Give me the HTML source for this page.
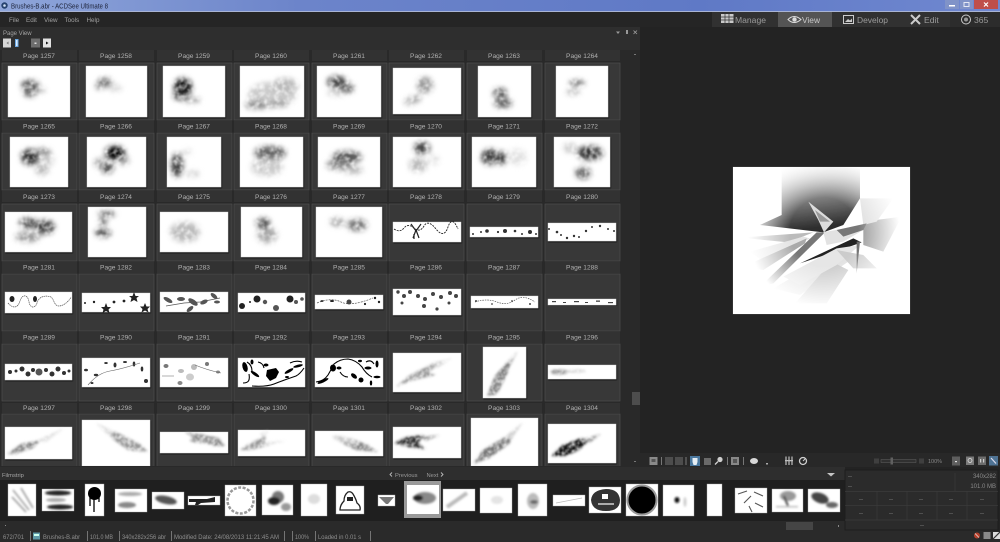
<!DOCTYPE html>
<html><head><meta charset="utf-8"><title>Brushes-B.abr - ACDSee Ultimate 8</title>
<style>
html,body{margin:0;padding:0;background:#232323;width:1000px;height:542px;overflow:hidden}
svg{display:block;font-family:"Liberation Sans",sans-serif}
.l{font-size:6.6px;fill:#b0b0b0;text-anchor:middle}
.c{fill:#383838;stroke:#4e4e4e;stroke-width:.7}
.h{fill:#323232}
.t{fill:#fff;stroke:#d8d8d8;stroke-width:.4;filter:url(#sh)}
.m{font-size:6.3px;fill:#a0a0a0}
.s{font-size:6.6px;fill:#8e8e8e}
.tb{font-size:8.6px;fill:#9b9b9b}
.i{font-size:6px;fill:#8a8a8a}
</style></head><body>
<svg width="1000" height="542" viewBox="0 0 1000 542" xmlns="http://www.w3.org/2000/svg">
<defs>
<linearGradient id="tg" x1="0" x2="1" y1="0" y2="0"><stop offset="0" stop-color="#8fa6da"/><stop offset=".3" stop-color="#6c84ca"/><stop offset=".7" stop-color="#5f79c6"/><stop offset="1" stop-color="#7088d0"/></linearGradient>
<linearGradient id="dk" x1="0" x2=".2" y1="0" y2="1"><stop offset="0" stop-color="#fff"/><stop offset=".45" stop-color="#999"/><stop offset="1" stop-color="#2e2e2e"/></linearGradient>
<radialGradient id="vg" gradientUnits="userSpaceOnUse" cx="824" cy="232" r="76"><stop offset="0" stop-color="#fff" stop-opacity="0"/><stop offset=".45" stop-color="#fff" stop-opacity="0"/><stop offset="1" stop-color="#fff" stop-opacity="1"/></radialGradient>
<filter id="b3" x="-20%" y="-20%" width="140%" height="140%"><feGaussianBlur stdDeviation=".3"/></filter>
<filter id="b1" x="-30%" y="-30%" width="160%" height="160%"><feGaussianBlur stdDeviation="1"/></filter>
<filter id="b5" x="-10%" y="-10%" width="120%" height="120%"><feGaussianBlur stdDeviation=".5"/></filter>
<filter id="cl" filterUnits="userSpaceOnUse" x="0" y="50" width="640" height="420" color-interpolation-filters="sRGB"><feGaussianBlur in="SourceGraphic" stdDeviation="2.600" result="b"/><feTurbulence type="fractalNoise" baseFrequency=".2" numOctaves="2" seed="4" result="n"/><feColorMatrix in="n" type="matrix" values="0 0 0 0 0 0 0 0 0 0 0 0 0 0 0 1.700 0 0 0 -.05" result="a"/><feComposite in="b" in2="a" operator="in" result="c"/><feGaussianBlur in="c" stdDeviation=".5"/></filter>
<filter id="wg" filterUnits="userSpaceOnUse" x="0" y="340" width="640" height="130" color-interpolation-filters="sRGB"><feGaussianBlur in="SourceGraphic" stdDeviation="1.400" result="b"/><feTurbulence type="fractalNoise" baseFrequency=".25" numOctaves="2" seed="9" result="n"/><feColorMatrix in="n" type="matrix" values="0 0 0 0 0 0 0 0 0 0 0 0 0 0 0 1.500 0 0 0 0" result="a"/><feComposite in="b" in2="a" operator="in" result="c"/><feGaussianBlur in="c" stdDeviation=".4"/></filter>
<filter id="sh" x="-10%" y="-10%" width="120%" height="125%"><feDropShadow dx=".6" dy="1" stdDeviation=".6" flood-color="#000" flood-opacity=".8"/></filter>
<clipPath id="pv"><rect x="733" y="167" width="177" height="147"/></clipPath>
<clipPath id="gr"><rect x="0" y="50" width="630" height="416"/></clipPath>
</defs>

<!-- base -->
<rect width="1000" height="542" fill="#232323"/>
<rect width="1000" height="11" fill="url(#tg)"/>
<rect y="11" width="1000" height="1" fill="#a9b4d4"/>
<circle cx="4.500" cy="5.500" r="3.200" fill="#26426e"/><circle cx="4.500" cy="5.500" r="1.300" fill="#cfe0f4"/>
<text x="11" y="8.500" font-size="7" fill="#1c2238" textLength="97" lengthAdjust="spacingAndGlyphs">Brushes-B.abr - ACDSee Ultimate 8</text>
<rect x="945" y="0" width="14" height="9" fill="#8093c8"/><rect x="949" y="5" width="6" height="1.500" fill="#fff"/>
<rect x="960" y="0" width="13" height="9" fill="#8093c8"/><rect x="964" y="2.500" width="5" height="4" fill="none" stroke="#e4e8f4"/>
<rect x="974" y="0" width="24" height="9" fill="#bf4f4a"/><path d="M984 2.500l4 4M988 2.500l-4 4" stroke="#fff" stroke-width="1.200"/>

<!-- menu -->
<rect y="12" width="1000" height="15" fill="#252525"/>
<text x="9" y="22" class="m">File</text><text x="26" y="22" class="m">Edit</text><text x="44" y="22" class="m">View</text><text x="64.500" y="22" class="m">Tools</text><text x="86.500" y="22" class="m">Help</text>
<rect x="712" y="12" width="66" height="15" fill="#313131"/>
<rect x="778" y="12" width="54" height="15" fill="#545454"/>
<rect x="832" y="12" width="67" height="15" fill="#313131"/>
<rect x="899" y="12" width="51" height="15" fill="#313131"/>
<rect x="950" y="12" width="50" height="15" fill="#2c2c2c"/>
<path d="M721 14h12.500v9h-12.500z" fill="#c9c9c9"/><path d="M725 14v9M729 14v9M721 17h12.500M721 20h12.500" stroke="#313131" stroke-width=".7"/>
<text x="735" y="23" class="tb" textLength="31" lengthAdjust="spacingAndGlyphs">Manage</text>
<path d="M788 19.500q6-6 13 0q-7 6-13 0z" fill="none" stroke="#ddd" stroke-width="1"/><circle cx="794.500" cy="19.500" r="2.200" fill="#ddd"/>
<text x="802" y="23" font-size="8.600" fill="#c8c8c8" textLength="18" lengthAdjust="spacingAndGlyphs">View</text>
<rect x="843.500" y="15.500" width="10" height="8" fill="none" stroke="#ccc" stroke-width="1"/><path d="M845 22l3-3 2 1.500 2-2v3.500z" fill="#ccc"/>
<text x="857" y="23" class="tb" textLength="31" lengthAdjust="spacingAndGlyphs">Develop</text>
<path d="M911 15l9 9M920 15l-9 9" stroke="#ccc" stroke-width="2"/>
<text x="924" y="23" class="tb">Edit</text>
<circle cx="966" cy="19.500" r="4.500" fill="none" stroke="#ccc" stroke-width="1"/><circle cx="966" cy="19.500" r="2" fill="#999"/>
<text x="974" y="23" class="tb">365</text>

<!-- page view panel -->
<rect x="0" y="27" width="640" height="23" fill="#2e2e2e"/>
<rect x="0" y="50" width="640" height="417" fill="#292929"/>
<text x="3" y="35" font-size="6" fill="#a4a4a4">Page View</text>
<rect x="3" y="38.500" width="8" height="9" fill="#d6d6d6"/><path d="M8.500 41.500v3l-2-1.500z" fill="#777"/>
<rect x="15" y="39" width="3.500" height="8" fill="#6aa6e0"/><rect x="16" y="40" width="1.500" height="6" fill="#d8ecff"/>
<rect x="31" y="38.500" width="9" height="9" fill="#6e6e6e"/><rect x="34.500" y="42.500" width="2" height="1.500" fill="#ddd"/>
<rect x="43" y="38.500" width="8" height="9" fill="#e2e2e2"/><path d="M46 41.500v3l2.500-1.500z" fill="#111"/>
<path d="M616 31.500h4l-2 2.500z" fill="#999"/><rect x="626" y="30" width="2" height="4" fill="#999"/>
<path d="M633.500 30.500l3.500 3.500M637 30.500l-3.500 3.500" stroke="#999" stroke-width=".8"/>
<rect x="630" y="50" width="10" height="417" fill="#292929"/>
<rect x="632" y="392" width="8" height="13" fill="#4d4d4d"/>
<rect x="634" y="54" width="2" height="1" fill="#777"/><rect x="634" y="461" width="2" height="1" fill="#777"/>

<g clip-path="url(#gr)">
<!-- label strips and cells -->
<rect class="h" x="2" y="50" width="75" height="11"/><rect class="h" x="79" y="50" width="75" height="11"/><rect class="h" x="157" y="50" width="75" height="11"/><rect class="h" x="234" y="50" width="75" height="11"/><rect class="h" x="312" y="50" width="75" height="11"/><rect class="h" x="389" y="50" width="75" height="11"/><rect class="h" x="467" y="50" width="75" height="11"/><rect class="h" x="545" y="50" width="75" height="11"/>
<rect class="h" x="2" y="121" width="75" height="11"/><rect class="h" x="79" y="121" width="75" height="11"/><rect class="h" x="157" y="121" width="75" height="11"/><rect class="h" x="234" y="121" width="75" height="11"/><rect class="h" x="312" y="121" width="75" height="11"/><rect class="h" x="389" y="121" width="75" height="11"/><rect class="h" x="467" y="121" width="75" height="11"/><rect class="h" x="545" y="121" width="75" height="11"/>
<rect class="h" x="2" y="191" width="75" height="11"/><rect class="h" x="79" y="191" width="75" height="11"/><rect class="h" x="157" y="191" width="75" height="11"/><rect class="h" x="234" y="191" width="75" height="11"/><rect class="h" x="312" y="191" width="75" height="11"/><rect class="h" x="389" y="191" width="75" height="11"/><rect class="h" x="467" y="191" width="75" height="11"/><rect class="h" x="545" y="191" width="75" height="11"/>
<rect class="h" x="2" y="262" width="75" height="11"/><rect class="h" x="79" y="262" width="75" height="11"/><rect class="h" x="157" y="262" width="75" height="11"/><rect class="h" x="234" y="262" width="75" height="11"/><rect class="h" x="312" y="262" width="75" height="11"/><rect class="h" x="389" y="262" width="75" height="11"/><rect class="h" x="467" y="262" width="75" height="11"/><rect class="h" x="545" y="262" width="75" height="11"/>
<rect class="h" x="2" y="332" width="75" height="11"/><rect class="h" x="79" y="332" width="75" height="11"/><rect class="h" x="157" y="332" width="75" height="11"/><rect class="h" x="234" y="332" width="75" height="11"/><rect class="h" x="312" y="332" width="75" height="11"/><rect class="h" x="389" y="332" width="75" height="11"/><rect class="h" x="467" y="332" width="75" height="11"/><rect class="h" x="545" y="332" width="75" height="11"/>
<rect class="h" x="2" y="403" width="75" height="10"/><rect class="h" x="79" y="403" width="75" height="10"/><rect class="h" x="157" y="403" width="75" height="10"/><rect class="h" x="234" y="403" width="75" height="10"/><rect class="h" x="312" y="403" width="75" height="10"/><rect class="h" x="389" y="403" width="75" height="10"/><rect class="h" x="467" y="403" width="75" height="10"/><rect class="h" x="545" y="403" width="75" height="10"/>
<rect class="c" x="2" y="63" width="75" height="57"/><rect class="c" x="79" y="63" width="75" height="57"/><rect class="c" x="157" y="63" width="75" height="57"/><rect class="c" x="234" y="63" width="75" height="57"/><rect class="c" x="312" y="63" width="75" height="57"/><rect class="c" x="389" y="63" width="75" height="57"/><rect class="c" x="467" y="63" width="75" height="57"/><rect class="c" x="545" y="63" width="75" height="57"/>
<rect class="c" x="2" y="133" width="75" height="57"/><rect class="c" x="79" y="133" width="75" height="57"/><rect class="c" x="157" y="133" width="75" height="57"/><rect class="c" x="234" y="133" width="75" height="57"/><rect class="c" x="312" y="133" width="75" height="57"/><rect class="c" x="389" y="133" width="75" height="57"/><rect class="c" x="467" y="133" width="75" height="57"/><rect class="c" x="545" y="133" width="75" height="57"/>
<rect class="c" x="2" y="204" width="75" height="57"/><rect class="c" x="79" y="204" width="75" height="57"/><rect class="c" x="157" y="204" width="75" height="57"/><rect class="c" x="234" y="204" width="75" height="57"/><rect class="c" x="312" y="204" width="75" height="57"/><rect class="c" x="389" y="204" width="75" height="57"/><rect class="c" x="467" y="204" width="75" height="57"/><rect class="c" x="545" y="204" width="75" height="57"/>
<rect class="c" x="2" y="274" width="75" height="57"/><rect class="c" x="79" y="274" width="75" height="57"/><rect class="c" x="157" y="274" width="75" height="57"/><rect class="c" x="234" y="274" width="75" height="57"/><rect class="c" x="312" y="274" width="75" height="57"/><rect class="c" x="389" y="274" width="75" height="57"/><rect class="c" x="467" y="274" width="75" height="57"/><rect class="c" x="545" y="274" width="75" height="57"/>
<rect class="c" x="2" y="344" width="75" height="57"/><rect class="c" x="79" y="344" width="75" height="57"/><rect class="c" x="157" y="344" width="75" height="57"/><rect class="c" x="234" y="344" width="75" height="57"/><rect class="c" x="312" y="344" width="75" height="57"/><rect class="c" x="389" y="344" width="75" height="57"/><rect class="c" x="467" y="344" width="75" height="57"/><rect class="c" x="545" y="344" width="75" height="57"/>
<rect class="c" x="2" y="414" width="75" height="60"/><rect class="c" x="79" y="414" width="75" height="60"/><rect class="c" x="157" y="414" width="75" height="60"/><rect class="c" x="234" y="414" width="75" height="60"/><rect class="c" x="312" y="414" width="75" height="60"/><rect class="c" x="389" y="414" width="75" height="60"/><rect class="c" x="467" y="414" width="75" height="60"/><rect class="c" x="545" y="414" width="75" height="60"/>

<!-- labels -->
<text class="l" x="39" y="58">Page 1257</text><text class="l" x="116" y="58">Page 1258</text><text class="l" x="194" y="58">Page 1259</text><text class="l" x="271" y="58">Page 1260</text><text class="l" x="349" y="58">Page 1261</text><text class="l" x="426" y="58">Page 1262</text><text class="l" x="504" y="58">Page 1263</text><text class="l" x="582" y="58">Page 1264</text>
<text class="l" x="39" y="128.500">Page 1265</text><text class="l" x="116" y="128.500">Page 1266</text><text class="l" x="194" y="128.500">Page 1267</text><text class="l" x="271" y="128.500">Page 1268</text><text class="l" x="349" y="128.500">Page 1269</text><text class="l" x="426" y="128.500">Page 1270</text><text class="l" x="504" y="128.500">Page 1271</text><text class="l" x="582" y="128.500">Page 1272</text>
<text class="l" x="39" y="199">Page 1273</text><text class="l" x="116" y="199">Page 1274</text><text class="l" x="194" y="199">Page 1275</text><text class="l" x="271" y="199">Page 1276</text><text class="l" x="349" y="199">Page 1277</text><text class="l" x="426" y="199">Page 1278</text><text class="l" x="504" y="199">Page 1279</text><text class="l" x="582" y="199">Page 1280</text>
<text class="l" x="39" y="269.500">Page 1281</text><text class="l" x="116" y="269.500">Page 1282</text><text class="l" x="194" y="269.500">Page 1283</text><text class="l" x="271" y="269.500">Page 1284</text><text class="l" x="349" y="269.500">Page 1285</text><text class="l" x="426" y="269.500">Page 1286</text><text class="l" x="504" y="269.500">Page 1287</text><text class="l" x="582" y="269.500">Page 1288</text>
<text class="l" x="39" y="339.500">Page 1289</text><text class="l" x="116" y="339.500">Page 1290</text><text class="l" x="194" y="339.500">Page 1291</text><text class="l" x="271" y="339.500">Page 1292</text><text class="l" x="349" y="339.500">Page 1293</text><text class="l" x="426" y="339.500">Page 1294</text><text class="l" x="504" y="339.500">Page 1295</text><text class="l" x="582" y="339.500">Page 1296</text>
<text class="l" x="39" y="410">Page 1297</text><text class="l" x="116" y="410">Page 1298</text><text class="l" x="194" y="410">Page 1299</text><text class="l" x="271" y="410">Page 1300</text><text class="l" x="349" y="410">Page 1301</text><text class="l" x="426" y="410">Page 1302</text><text class="l" x="504" y="410">Page 1303</text><text class="l" x="582" y="410">Page 1304</text>

<!-- thumbnails -->
<rect class="t" x="8" y="66" width="62" height="51"/><rect class="t" x="86" y="66" width="61" height="51"/><rect class="t" x="163" y="66" width="62" height="51"/><rect class="t" x="240" y="66" width="64" height="51"/><rect class="t" x="317" y="66" width="64" height="51"/><rect class="t" x="393" y="68" width="68" height="46"/><rect class="t" x="478" y="66" width="53" height="51"/><rect class="t" x="556" y="66" width="52" height="51"/>
<rect class="t" x="10" y="137" width="58" height="50"/><rect class="t" x="87" y="137" width="59" height="50"/><rect class="t" x="167" y="137" width="54" height="50"/><rect class="t" x="240" y="137" width="63" height="50"/><rect class="t" x="318" y="137" width="62" height="50"/><rect class="t" x="393" y="137" width="68" height="50"/><rect class="t" x="472" y="137" width="64" height="50"/><rect class="t" x="554" y="137" width="56" height="50"/>
<rect class="t" x="5" y="212" width="67" height="40"/><rect class="t" x="88" y="207" width="58" height="50"/><rect class="t" x="160" y="212" width="68" height="40"/><rect class="t" x="241" y="207" width="61" height="50"/><rect class="t" x="316" y="207" width="66" height="50"/><rect class="t" x="393" y="222" width="68" height="20"/><rect class="t" x="470" y="227" width="68" height="10"/><rect class="t" x="548" y="223" width="68" height="18"/>
<rect class="t" x="5" y="292" width="67" height="21"/><rect class="t" x="82" y="293" width="68" height="19"/><rect class="t" x="160" y="292" width="68" height="20"/><rect class="t" x="238" y="293" width="67" height="19"/><rect class="t" x="315" y="295" width="68" height="14"/><rect class="t" x="393" y="289" width="68" height="26"/><rect class="t" x="471" y="296" width="67" height="12"/><rect class="t" x="548" y="299" width="68" height="6"/>
<rect class="t" x="5" y="364" width="67" height="16"/><rect class="t" x="82" y="358" width="68" height="29"/><rect class="t" x="160" y="358" width="68" height="29"/><rect class="t" x="238" y="358" width="67" height="29"/><rect class="t" x="315" y="358" width="68" height="29"/><rect class="t" x="393" y="353" width="68" height="39"/><rect class="t" x="483" y="347" width="43" height="51"/><rect class="t" x="548" y="365" width="68" height="14"/>
<rect class="t" x="5" y="427" width="67" height="32"/><rect class="t" x="82" y="420" width="68" height="46"/><rect class="t" x="160" y="432" width="68" height="21"/><rect class="t" x="238" y="430" width="67" height="26"/><rect class="t" x="315" y="431" width="68" height="25"/><rect class="t" x="393" y="427" width="68" height="31"/><rect class="t" x="471" y="418" width="67" height="48"/><rect class="t" x="548" y="424" width="68" height="39"/>

<!-- cloud brushes -->
<g filter="url(#cl)">
<ellipse cx="30" cy="85" rx="9" ry="5" fill="#555"/><ellipse cx="30" cy="92" rx="7" ry="5" fill="#666"/><ellipse cx="41" cy="90" rx="5" ry="2" fill="#aaa"/>
<ellipse cx="105" cy="82" rx="7" ry="4" fill="#666"/><ellipse cx="100" cy="86" rx="5" ry="3" fill="#777"/><ellipse cx="115" cy="88" rx="7" ry="3" fill="#ccc"/>
<ellipse cx="183" cy="87" rx="9" ry="9" fill="#111"/><ellipse cx="180" cy="96" rx="7" ry="4" fill="#444"/><ellipse cx="192" cy="100" rx="8" ry="3" fill="#999"/>
<ellipse cx="272" cy="95" rx="24" ry="13" fill="#ccc"/><ellipse cx="285" cy="86" rx="13" ry="8" fill="#bbb"/><ellipse cx="257" cy="105" rx="12" ry="4" fill="#888"/><ellipse cx="278" cy="104" rx="10" ry="3" fill="#999"/>
<ellipse cx="337" cy="82" rx="10" ry="6" fill="#444"/><ellipse cx="347" cy="88" rx="7" ry="5" fill="#666"/><ellipse cx="337" cy="93" rx="10" ry="3" fill="#ccc"/>
<ellipse cx="425" cy="85" rx="8" ry="8" fill="#999"/><ellipse cx="413" cy="100" rx="9" ry="4" fill="#aaa" transform="rotate(-20 413 100)"/>
<ellipse cx="500" cy="93" rx="7" ry="5" fill="#555"/><ellipse cx="503" cy="103" rx="9" ry="5" fill="#666"/>
<ellipse cx="577" cy="83" rx="8" ry="2.500" fill="#555"/><ellipse cx="573" cy="92" rx="7" ry="2.500" fill="#aaa"/>
<ellipse cx="30" cy="157" rx="9" ry="8" fill="#333"/><ellipse cx="43" cy="153" rx="8" ry="5" fill="#888"/><ellipse cx="42" cy="170" rx="7" ry="5" fill="#bbb"/><ellipse cx="46" cy="160" rx="8" ry="6" fill="#ccc"/>
<ellipse cx="115" cy="153" rx="10" ry="7" fill="#000"/><ellipse cx="107" cy="168" rx="7" ry="5" fill="#444"/><ellipse cx="100" cy="163" rx="6" ry="5" fill="#aaa"/><ellipse cx="124" cy="160" rx="5" ry="5" fill="#999"/>
<ellipse cx="177" cy="165" rx="6" ry="12" fill="#444"/><ellipse cx="193" cy="174" rx="7" ry="3" fill="#ccc"/><ellipse cx="187" cy="152" rx="5" ry="3" fill="#ddd"/>
<ellipse cx="270" cy="153" rx="16" ry="7" fill="#666"/><ellipse cx="267" cy="167" rx="16" ry="9" fill="#ccc"/>
<ellipse cx="347" cy="157" rx="15" ry="6" fill="#555"/><ellipse cx="340" cy="165" rx="14" ry="5" fill="#888"/><ellipse cx="353" cy="170" rx="10" ry="4" fill="#bbb"/>
<ellipse cx="422" cy="148" rx="8" ry="6" fill="#444"/><ellipse cx="418" cy="165" rx="9" ry="7" fill="#bbb"/><ellipse cx="434" cy="160" rx="5" ry="5" fill="#ddd"/>
<ellipse cx="490" cy="157" rx="9" ry="8" fill="#444"/><ellipse cx="502" cy="158" rx="3" ry="7" fill="#111"/><ellipse cx="517" cy="157" rx="10" ry="8" fill="#e2e2e2"/>
<ellipse cx="590" cy="153" rx="13" ry="7" fill="#333"/><ellipse cx="583" cy="173" rx="8" ry="6" fill="#666"/><ellipse cx="570" cy="148" rx="7" ry="5" fill="#ccc"/>
<ellipse cx="28" cy="223" rx="9" ry="5" fill="#444"/><ellipse cx="45" cy="227" rx="10" ry="7" fill="#444"/><ellipse cx="28" cy="237" rx="13" ry="5" fill="#999"/>
<ellipse cx="107" cy="214" rx="9" ry="2.500" fill="#555"/><ellipse cx="103" cy="222" rx="4" ry="3" fill="#444"/><ellipse cx="103" cy="233" rx="8" ry="4" fill="#444"/>
<ellipse cx="185" cy="232" rx="15" ry="10" fill="#bbb"/>
<ellipse cx="263" cy="223" rx="7" ry="5" fill="#444"/><ellipse cx="267" cy="235" rx="10" ry="8" fill="#aaa"/>
<ellipse cx="337" cy="222" rx="7" ry="4" fill="#999"/><ellipse cx="357" cy="225" rx="10" ry="6" fill="#777"/>
</g>
<!-- ornaments row 3 -->
<g fill="none" stroke="#222" stroke-width=".9" filter="url(#b3)">
<path d="M394 229q6 4 10-1t10 0 10-2 12 3 12-2 10 2" stroke-dasharray="2 1"/>
<path d="M411 224l5 7 5-7M416 230l-3 8M416 230l3 8M414 234v5" stroke-width="1.200"/>
</g>
<g fill="#333" filter="url(#b3)">
<circle cx="481" cy="232" r="1"/><circle cx="487" cy="231" r="1.800"/><circle cx="498" cy="232" r="1.100"/><circle cx="505" cy="231" r="2"/><circle cx="515" cy="231" r="1.300"/><circle cx="530" cy="232" r="2"/><circle cx="522" cy="234" r="1"/><circle cx="536" cy="234" r="1"/><circle cx="473" cy="234" r="1"/>
<circle cx="549" cy="229" r="1"/><circle cx="557" cy="232" r="1.300"/><circle cx="561" cy="235" r="1"/><circle cx="567" cy="238" r="1.200"/><circle cx="574" cy="236" r="1.200"/><circle cx="579" cy="237" r="1"/><circle cx="586" cy="231" r="1.200"/><circle cx="592" cy="227" r="1"/><circle cx="600" cy="226" r="1.200"/><circle cx="608" cy="229" r="1"/><circle cx="614" cy="231" r="1"/>
</g>
<!-- row 4 ornaments -->
<g fill="none" stroke="#555" stroke-width=".7" filter="url(#b3)">
<path d="M8 303c5 6 10 5 12-2s8-7 9 1c1 6 6 7 8 1 2-7 9-8 14-6 3 2 3 9 8 9 5 0 11-6 12-9" stroke-dasharray="1.500 .6"/>
<path d="M166 306l18-3 16-1 20-4"/><path d="M317 303q14-6 24-1t32-4" stroke-dasharray="2 1"/><path d="M475 302q12-4 22 0t18-2 20 2" stroke-dasharray="1.500 1"/>
</g>
<g fill="#222" filter="url(#b3)">
<ellipse cx="12" cy="299" rx="2.500" ry="3"/><ellipse cx="35" cy="299" rx="2" ry="3"/>
<circle cx="85" cy="303" r="1"/><circle cx="94" cy="302" r="1.200"/><polygon points="106,303 107.500,307 111,307 108.500,309.500 109.500,313 106,311 102.500,313 103.500,309.500 101,307 104.500,307"/><circle cx="114" cy="302" r="1.400"/><circle cx="124" cy="301" r="1.400"/><polygon points="134,292 135.500,296 139,296 136.500,298 137.500,302 134,300 130.500,302 131.500,298 129,296 132.500,296"/><polygon points="145,303 146.500,306.500 150,306.500 147.500,309 148.500,312.500 145,310.500 141.500,312.500 142.500,309 140,306.500 143.500,306.500"/>
<ellipse cx="168" cy="300" rx="5" ry="2" fill="#555" transform="rotate(30 168 300)"/><ellipse cx="181" cy="299" rx="4" ry="2" fill="#555"/><ellipse cx="193" cy="302" rx="5.500" ry="2.500" fill="#555" transform="rotate(35 193 302)"/><ellipse cx="190" cy="309" rx="4" ry="2" fill="#555" transform="rotate(-40 190 309)"/><ellipse cx="204" cy="302" rx="4" ry="2" fill="#555" transform="rotate(-25 204 302)"/><ellipse cx="214" cy="296" rx="4" ry="2" fill="#555" transform="rotate(40 214 296)"/><ellipse cx="217" cy="302" rx="3" ry="1.500" fill="#555"/>
<circle cx="242" cy="306" r="3"/><circle cx="257" cy="299" r="3.500"/><circle cx="265" cy="302" r="2.200" fill="#555"/><circle cx="276" cy="308" r="3" fill="#555"/><circle cx="290" cy="299" r="3.500"/><circle cx="296" cy="302" r="2" fill="#555"/><circle cx="302" cy="299" r="1.800" fill="#555"/><circle cx="250" cy="302" r="1"/>
<ellipse cx="322" cy="301" rx="1.500" ry=".9"/><ellipse cx="332" cy="301" rx="2" ry="1"/><circle cx="349" cy="302" r="2.500" fill="#444"/><circle cx="365" cy="304" r="1.100"/><circle cx="375" cy="298" r="1.200"/><circle cx="379" cy="302" r="1.200"/>
</g>
<g fill="#444" filter="url(#b3)">
<circle cx="398" cy="292" r="1.700"/><circle cx="404" cy="296" r="2"/><circle cx="410" cy="292" r="2"/><circle cx="418" cy="296" r="2"/><circle cx="425" cy="299" r="2"/><circle cx="433" cy="294" r="2"/><circle cx="441" cy="297" r="2"/><circle cx="450" cy="293" r="2"/><circle cx="456" cy="296" r="2"/><circle cx="402" cy="303" r="1.500"/><circle cx="424" cy="306" r="2"/><circle cx="437" cy="309" r="1.600"/><circle cx="449" cy="303" r="1.500"/>
<circle cx="476" cy="301" r="1"/><circle cx="492" cy="304" r=".9"/><circle cx="512" cy="301" r=".9"/><circle cx="530" cy="304" r="1"/>
<rect x="552" y="301" width="4" height="1.200"/><rect x="563" y="302" width="3" height="1"/><rect x="574" y="301" width="5" height="1.200"/><rect x="585" y="302" width="3" height="1"/><rect x="596" y="300.500" width="4" height="1.300"/><rect x="608" y="302" width="5" height="1.200"/>
</g>
<!-- row 5 ornaments -->
<g fill="#333" filter="url(#b3)">
<circle cx="10" cy="372" r="2"/><circle cx="16" cy="371" r="1.500"/><circle cx="22" cy="369" r="2.500"/><circle cx="28" cy="374" r="2.500"/><circle cx="33" cy="370" r="2"/><circle cx="39" cy="372" r="3.500" fill="#555"/><circle cx="46" cy="370" r="2"/><circle cx="52" cy="374" r="2.500"/><circle cx="58" cy="369" r="2.500"/><circle cx="64" cy="373" r="2"/><circle cx="69" cy="371" r="1.500"/>
<ellipse cx="86" cy="370" rx="2" ry="1.300"/><ellipse cx="96" cy="375" rx="2.200" ry="1.200"/><ellipse cx="106" cy="363" rx="1.800" ry="1"/><ellipse cx="115" cy="365" rx="1.500" ry="2.500"/><ellipse cx="125" cy="362" rx="2" ry="1"/><ellipse cx="134" cy="364" rx="1.300" ry="2.500"/><ellipse cx="142" cy="369" rx="1.300" ry="2.500"/><ellipse cx="146" cy="381" rx="2" ry="2"/><ellipse cx="92" cy="383" rx="1.500" ry="1"/>
<ellipse cx="166" cy="366" rx="2.500" ry="2" fill="#777"/><ellipse cx="181" cy="371" rx="3" ry="2" fill="#bbb"/><ellipse cx="194" cy="367" rx="3" ry="3" fill="#bbb"/><ellipse cx="190" cy="377" rx="4" ry="3.500" fill="#ccc"/><ellipse cx="207" cy="364" rx="2" ry="2" fill="#777"/><ellipse cx="180" cy="383" rx="2.500" ry="2" fill="#888"/><ellipse cx="218" cy="372" rx="2" ry="1.500" fill="#888"/>
</g>
<g fill="none" stroke="#666" stroke-width=".6" filter="url(#b3)">
<path d="M88 385q10-12 22-14t30-8"/><path d="M162 376h12M195 365q12 5 26 8"/>
</g>
<g fill="none" stroke="#000" stroke-width="1" filter="url(#b3)">
<path d="M243 383c6 0 7-3 6-9M252 386q14 1 22-2 10-4 22-8 4-2 8-8M247 362q5 3 5 9M258 362q5 1 6 6M290 363q6-3 12-1" stroke-width="1.100"/>
<path d="M316 382q8-1 12-7 3-5 6-11 6-5 14-5 8 1 14 8 4 7 10 10M340 372q3 5 8 5M366 362q5-3 8 2" stroke-width="1.100"/>
</g>
<g fill="#000" filter="url(#b3)">
<ellipse cx="245" cy="367" rx="2.500" ry="5" transform="rotate(-15 245 367)"/><ellipse cx="255" cy="374" rx="5" ry="1.500" transform="rotate(35 255 374)"/><ellipse cx="252" cy="362" rx="1.500" ry="2.500"/><ellipse cx="266" cy="365" rx="2.500" ry="1.500"/><polygon points="267,370 276,368 279,372 276,378 270,381 266,376"/><ellipse cx="289" cy="371" rx="5" ry="1.500" transform="rotate(-30 289 371)"/><ellipse cx="298" cy="366" rx="5" ry="1.300" transform="rotate(-15 298 366)"/><ellipse cx="287" cy="377" rx="2" ry="1"/>
<ellipse cx="323" cy="381" rx="6" ry="1.500" transform="rotate(-25 323 381)"/><ellipse cx="333" cy="368" rx="3" ry="3.500"/><ellipse cx="339" cy="368" rx="2.500" ry="1.500"/><ellipse cx="354" cy="376" rx="3.500" ry="2" transform="rotate(40 354 376)"/><ellipse cx="361" cy="380" rx="2.500" ry="2.500"/><ellipse cx="368" cy="368" rx="3.500" ry="1.500"/><ellipse cx="377" cy="364" rx="1.500" ry="3.500"/><ellipse cx="377" cy="377" rx="3.500" ry="1.300"/><ellipse cx="371" cy="383" rx="1.200" ry="2.500"/><ellipse cx="360" cy="361" rx="2" ry="1.200"/>
</g>
<!-- wings -->
<g filter="url(#wg)">
<path d="M396 387l14-12 24-12 12-3-18 12 8 3-26 6z" fill="#999"/><path d="M434 364l18-6-14 10z" fill="#ddd"/>
<path d="M487 396l8-20 18-20-6 18-10 20z" fill="#777"/><path d="M510 360l8-10-6 14z" fill="#ccc"/>
<ellipse cx="559" cy="372" rx="9" ry="2.500" fill="#888"/><ellipse cx="576" cy="371" rx="10" ry="1.500" fill="#ccc"/>
<path d="M7 454l14-10 20-4-8 8-18 6z" fill="#888"/><path d="M36 441l28-13-18 14z" fill="#ddd"/>
<path d="M148 452l-8-8-24-12-12-4 10 12 14 10z" fill="#999"/><path d="M116 432l-20-9 12 12z" fill="#ddd"/>
<path d="M225 446l-6-8-20-4-14-2 12 8 18 6z" fill="#888"/><ellipse cx="202" cy="440" rx="12" ry="3" fill="#999"/>
<path d="M240 450l12-8 14-6-2 8 6 1-20 5z" fill="#999"/><path d="M264 442l22-1-18 4z" fill="#ddd"/><path d="M260 434l8-4-4 8z" fill="#ddd"/>
<path d="M378 452l-12-8-16-6 4 6-14-2 16 8z" fill="#888"/><ellipse cx="345" cy="440" rx="13" ry="3" fill="#ccc" transform="rotate(15 345 440)"/>
<path d="M394 443l12-6 18-2-6 8 8 6-18-2z" fill="#333"/><path d="M420 437l20-2-14 6z" fill="#999"/>
<path d="M473 464l10-14 24-14 10-8-8 16-20 14z" fill="#777"/><path d="M505 437l18-15-12 18z" fill="#ccc"/>
<path d="M551 456l10-10 20-8 8 2-10 10-14 6z" fill="#111"/><path d="M581 440l20-6-12 9z" fill="#888"/>
</g>

</g>

<!-- viewer -->
<rect x="640" y="28" width="360" height="425" fill="#232323"/>
<rect x="733" y="167" width="177" height="147" fill="#fff" stroke="#888" stroke-width=".3"/>
<g clip-path="url(#pv)">
<g transform="translate(720 155) scale(.3333)" filter="url(#b5)">
<polygon points="430,200 545,185 490,290 430,270" fill="#999"/>
<polygon points="420,130 520,130 470,200 430,210" fill="#ddd"/>
<polygon points="185,30 420,40 420,130 370,210 310,232 120,210 185,180" fill="url(#dk)"/>
<polygon points="60,248 280,232 205,262" fill="#bbb"/>
<polygon points="90,290 250,245 270,250 130,320" fill="#e4e4e4"/>
<polygon points="70,335 260,250 255,265 130,345" fill="#aaa"/>
<polygon points="290,232 315,232 160,385 120,395" fill="#777"/>
<polygon points="160,400 350,290 385,320 240,420" fill="#e2e2e2"/>
<polygon points="225,445 335,320 385,345 320,445" fill="#ccc"/>
<polygon points="265,140 340,200 312,232 295,195" fill="#dcdcdc"/>
<polygon points="285,165 330,200 300,200" fill="#999"/>
<polygon points="310,232 400,215 430,225 370,260 320,270" fill="#e2e2e2"/>
<polygon points="240,325 400,250 425,262 340,292" fill="#222"/>
<polygon points="190,365 350,280 420,270 350,330 240,390" fill="#e6e6e6"/>
<polygon points="350,285 430,300 470,340 400,340" fill="#ccc"/>
<polygon points="410,260 420,260 410,355" fill="#666"/>
<polygon points="350,225 440,205 430,225 370,245" fill="#777"/>
</g>
<rect x="733" y="167" width="177" height="147" fill="url(#vg)"/>
</g>

<!-- viewer toolbar -->
<rect x="640" y="453" width="360" height="14" fill="#282828"/>
<rect x="649.500" y="457" width="8" height="8" fill="#8a8a8a"/><rect x="651.500" y="459" width="4" height="3" fill="#555"/>
<rect x="661" y="457" width="1" height="8" fill="#777"/>
<rect x="665" y="457" width="8" height="8" fill="#4d4d4d"/><rect x="675" y="457" width="8" height="8" fill="#4d4d4d"/>
<rect x="685.500" y="457" width="1" height="8" fill="#777"/>
<rect x="690" y="456" width="10" height="10" fill="#4a789f"/><path d="M692.500 458h5v4l-1 3h-3l-1-3z" fill="#e6eef4"/>
<rect x="704" y="458" width="7" height="7" fill="#6a6a6a"/>
<circle cx="720" cy="459.500" r="2.600" fill="#cfcfcf"/><path d="M718 461.500l-3 3" stroke="#cfcfcf" stroke-width="1.300"/>
<rect x="727" y="457" width="1" height="8" fill="#777"/>
<rect x="731" y="457" width="8" height="8" fill="#888"/><rect x="733" y="459" width="4" height="4" fill="#555"/>
<rect x="743" y="457" width="1" height="8" fill="#777"/>
<ellipse cx="754" cy="461" rx="4" ry="3" fill="#d8d8d8"/><rect x="766" y="463" width="2" height="1.500" fill="#aaa"/>
<path d="M786 456.500v8.500M789 456.500v8.500M792 456.500v8.500" stroke="#bdbdbd" stroke-width="1.200"/><rect x="785" y="460" width="8" height="1.300" fill="#bdbdbd"/>
<circle cx="803" cy="461" r="3.500" fill="none" stroke="#d0d0d0" stroke-width="1.300"/><path d="M803 461l2-2" stroke="#d0d0d0"/>
<rect x="874" y="458.500" width="5" height="5" fill="#3f3f3f"/>
<rect x="881" y="459.500" width="35" height="3" fill="#303030" stroke="#606060" stroke-width=".5"/><rect x="890.500" y="457.500" width="2.500" height="7" fill="#606060"/>
<rect x="919" y="458.500" width="5" height="5" fill="#3f3f3f"/>
<text x="928" y="463" font-size="5.500" fill="#888">100%</text>
<rect x="952" y="456.500" width="8" height="9" fill="#5e5e5e"/><rect x="955" y="461" width="2" height="1.200" fill="#ddd"/>
<rect x="966" y="456.500" width="8" height="8.500" fill="#7a7a7a"/><circle cx="970" cy="460.500" r="2" fill="none" stroke="#ddd" stroke-width=".8"/>
<rect x="978" y="456.500" width="8" height="8.500" fill="#6c6c6c"/><rect x="980" y="459" width="1.200" height="3.500" fill="#ccc"/><rect x="983" y="459" width="1.200" height="3.500" fill="#ccc"/>
<rect x="989" y="456" width="9" height="9.500" fill="#4f7394"/><path d="M991 458l5 5.500" stroke="#dde" stroke-width="1.200"/>

<!-- filmstrip -->
<rect x="0" y="467" width="845" height="13" fill="#2e2e2e"/>
<text x="2" y="477" font-size="5.800" fill="#a4a4a4">Filmstrip</text>
<path d="M392 472.500l-2 2 2 2" fill="none" stroke="#bbb" stroke-width=".9"/><text x="395" y="477" font-size="5.800" fill="#999">Previous</text>
<text x="426.500" y="477" font-size="5.800" fill="#999">Next</text><path d="M441 472.500l2 2-2 2" fill="none" stroke="#bbb" stroke-width=".9"/>
<path d="M827 473h8l-4 3.500z" fill="#c4c4c4"/>
<rect x="0" y="480" width="845" height="41" fill="#1f1f1f"/>
<g fill="#fff" stroke="#aaa" stroke-width=".4">
<rect x="8" y="484" width="28" height="32"/><rect x="42" y="489" width="32" height="22"/><rect x="85" y="484" width="19" height="32"/><rect x="115" y="489" width="32" height="23"/><rect x="152" y="492" width="32" height="17"/><rect x="188" y="496" width="32" height="9"/><rect x="225" y="485" width="31" height="31"/><rect x="262" y="485" width="31" height="30"/><rect x="301" y="484" width="26" height="32"/><rect x="336" y="486" width="28" height="28"/><rect x="378" y="495" width="17" height="11"/>
<rect x="443" y="489" width="32" height="22"/><rect x="480" y="488" width="32" height="25"/><rect x="518" y="484" width="29" height="32"/><rect x="553" y="495" width="32" height="11"/><rect x="589" y="487" width="32" height="26"/><rect x="626" y="484" width="32" height="32"/><rect x="663" y="485" width="31" height="31"/><rect x="707" y="484" width="15" height="32"/><rect x="735" y="488" width="32" height="25"/><rect x="772" y="489" width="31" height="23"/><rect x="808" y="489" width="32" height="23"/>
</g>
<rect x="404" y="481" width="37" height="37" fill="#9a9a9a"/><rect x="407" y="485" width="32" height="29" fill="#fff"/>
<g filter="url(#b1)">
<path d="M13 490l16 20M21 488l12 20M12 497l14 15" stroke="#888" stroke-width="1.300" fill="none"/>
<ellipse cx="58" cy="493" rx="13" ry="2.500" fill="#222"/><ellipse cx="56" cy="500" rx="10" ry="2" fill="#aaa"/><ellipse cx="60" cy="507" rx="13" ry="2.500" fill="#222"/>
<ellipse cx="130" cy="494" rx="12" ry="2" fill="#aaa"/><ellipse cx="127" cy="505" rx="9" ry="3" fill="#888"/>
<ellipse cx="166" cy="500" rx="11" ry="4" fill="#555" transform="rotate(12 166 500)"/>
<ellipse cx="278" cy="497" rx="6" ry="6" fill="#777"/><ellipse cx="274" cy="501" rx="6" ry="4" fill="#222"/><ellipse cx="286" cy="507" rx="5" ry="4" fill="#999"/>
<ellipse cx="314" cy="499" rx="6" ry="5" fill="#ddd"/>
<ellipse cx="425" cy="498" rx="11" ry="6" fill="#888"/><ellipse cx="418" cy="498" rx="5" ry="3" fill="#222"/>
<path d="M447 507l20-14" stroke="#bbb" stroke-width="4"/><ellipse cx="497" cy="500" rx="6" ry="4" fill="#e4e4e4"/>
<ellipse cx="533" cy="501" rx="6" ry="8" fill="#bbb"/><ellipse cx="534" cy="502" rx="4" ry="2" fill="#666"/>
<ellipse cx="677" cy="500" rx="2.500" ry="3" fill="#111"/><ellipse cx="685" cy="502" rx="1.500" ry="5" fill="#ccc"/>
<ellipse cx="788" cy="496" rx="8" ry="5" fill="#999"/><path d="M784 496l4 10" stroke="#444" stroke-width="2"/><rect x="776" y="506" width="22" height="1.500" fill="#bbb"/>
<ellipse cx="820" cy="498" rx="9" ry="5" fill="#444" transform="rotate(20 820 498)"/><ellipse cx="832" cy="505" rx="6" ry="3" fill="#666"/>
</g>
<circle cx="94.500" cy="493.500" r="6.500" fill="#000"/><path d="M90 497v9M94 498v14M99 497v5" stroke="#000" stroke-width="1.300"/>
<path d="M189 499h18l8-2v5l-14 1-3 2h-3l1-3h-7z" fill="#222"/>
<circle cx="240.500" cy="500.500" r="13" fill="none" stroke="#999" stroke-width="2.500" stroke-dasharray="3 1.500"/>
<path d="M340 510q0-5 4-9 0-6 4-9 3-1 5 2 3 5 4 9 4 3 3 7z" fill="#fff" stroke="#222" stroke-width="1.300"/><rect x="347" y="497" width="6" height="4" fill="#222"/>
<path d="M379 497h15l-6 7h-2z" fill="#777"/>
<path d="M556 503l26-5" stroke="#bbb" stroke-width=".7"/>
<path d="M591 500q1-10 15-11 13 0 14 11 0 11-14 11-14 0-15-11z" fill="#333"/><rect x="602" y="494" width="6" height="5" fill="#fff"/><rect x="598" y="503" width="16" height="2" fill="#aaa"/>
<circle cx="642" cy="500" r="14.500" fill="#000" stroke="#999" stroke-width="2"/>
<g fill="none" stroke="#555" stroke-width="1.100"><path d="M738 494l9-3M744 503l7-7M754 492l9 4M755 503l8 4M749 506l3 6"/></g>

<!-- filmstrip scrollbar -->
<rect x="0" y="521" width="845" height="21" fill="#2a2a2a"/>
<rect x="786" y="522" width="27" height="8" fill="#454545"/>
<rect x="838" y="525" width="1" height="2" fill="#888"/>
<rect x="5" y="525" width="1" height="1" fill="#888"/>

<!-- status -->
<rect x="0" y="530" width="1000" height="12" fill="#2a2a2a"/>
<text x="3" y="539" class="s" textLength="21" lengthAdjust="spacingAndGlyphs">672/701</text>
<rect x="30" y="531" width=".8" height="10" fill="#888"/>
<rect x="33" y="532.500" width="7" height="7" fill="#5f9aa8"/><rect x="34" y="534" width="5" height="2" fill="#cfe"/>
<text x="43" y="539" class="s" textLength="37" lengthAdjust="spacingAndGlyphs">Brushes-B.abr</text>
<rect x="87" y="531" width=".8" height="10" fill="#888"/><text x="90" y="539" class="s" textLength="23" lengthAdjust="spacingAndGlyphs">101.0 MB</text>
<rect x="119" y="531" width=".8" height="10" fill="#888"/><text x="122" y="539" class="s" textLength="44" lengthAdjust="spacingAndGlyphs">340x282x256 abr</text>
<rect x="171" y="531" width=".8" height="10" fill="#888"/><text x="174" y="539" class="s" textLength="105" lengthAdjust="spacingAndGlyphs">Modified Date: 24/08/2013 11:21:45 AM</text>
<rect x="284" y="531" width=".8" height="10" fill="#888"/>
<rect x="292" y="531" width=".8" height="10" fill="#888"/><text x="295" y="539" class="s" textLength="14" lengthAdjust="spacingAndGlyphs">100%</text>
<rect x="315" y="531" width=".8" height="10" fill="#888"/><text x="318" y="539" class="s" textLength="43" lengthAdjust="spacingAndGlyphs">Loaded in 0.01 s</text>
<rect x="370" y="531" width=".8" height="10" fill="#888"/>

<!-- info panel -->
<rect x="845" y="470" width="153" height="60" fill="#2b2b2b" stroke="#1e1e1e"/>
<g stroke="#3c3c3c" stroke-width=".7">
<path d="M845 491.500h153M845 505.700h153M845 520h153"/>
<path d="M955 473v18M877 491.500v28.500M907 491.500v28.500M937 491.500v28.500M967 491.500v28.500"/>
</g>
<text x="848" y="478" class="i">--</text><text x="996" y="478" class="i" text-anchor="end">340x282</text>
<text x="848" y="488" class="i">--</text><text x="996" y="488" class="i" text-anchor="end">101.0 MB</text>
<text x="861" y="501" class="i" text-anchor="middle">--</text><text x="891" y="501" class="i" text-anchor="middle">--</text><text x="921" y="501" class="i" text-anchor="middle">--</text><text x="951" y="501" class="i" text-anchor="middle">--</text><text x="982" y="501" class="i" text-anchor="middle">--</text>
<text x="861" y="515" class="i" text-anchor="middle">--</text><text x="891" y="515" class="i" text-anchor="middle">--</text><text x="921" y="515" class="i" text-anchor="middle">--</text><text x="951" y="515" class="i" text-anchor="middle">--</text><text x="982" y="515" class="i" text-anchor="middle">--</text>
<text x="922" y="527" class="i" text-anchor="middle">--</text>

<!-- status icons -->
<circle cx="977" cy="535.500" r="3" fill="#b5402c"/><path d="M975 533.500l4 4" stroke="#eee" stroke-width=".7"/>
<rect x="983.500" y="532" width="7" height="7" fill="#8a8a8a"/>
<rect x="993" y="532" width="7" height="7" fill="#ddd"/><path d="M993 539l7-7" stroke="#333" stroke-width="1.200"/>
</svg>
</body></html>
